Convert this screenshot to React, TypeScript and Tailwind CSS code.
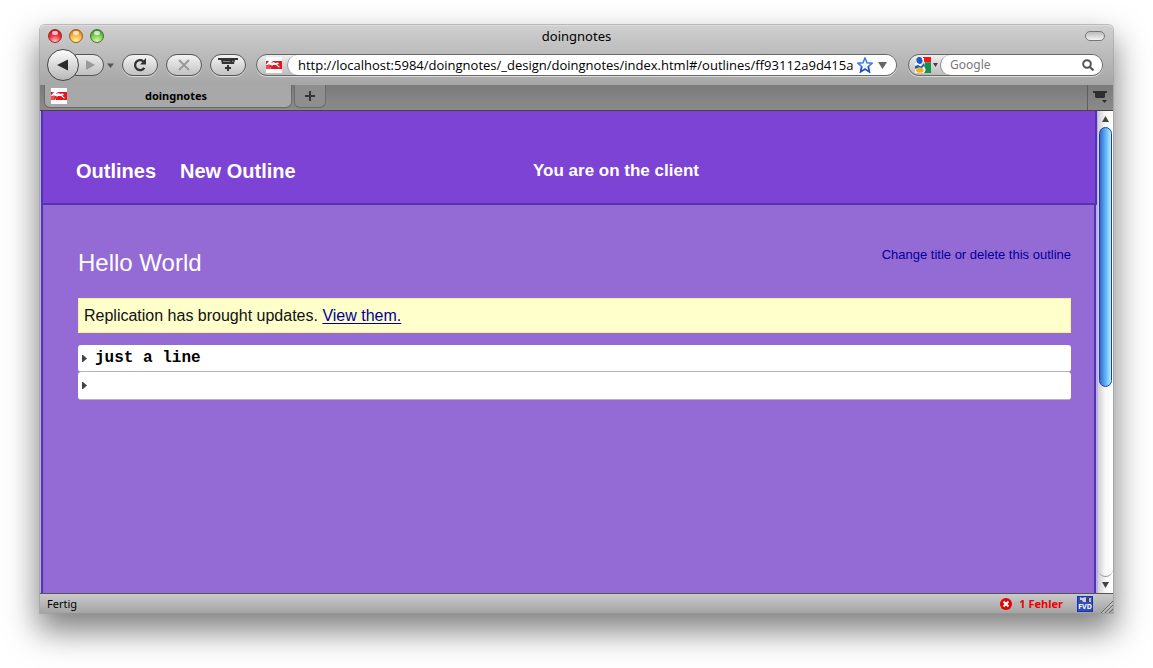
import React from "react";

const pill =
  "flex h-[22px] w-9 items-center justify-center rounded-full border border-[#555] bg-linear-to-b from-[#f4f4f4] to-[#c2c2c2] shadow-[0_1px_0_#d8d8d8]";

function Favicon() {
  return (
    <svg className="size-4 shrink-0" viewBox="0 0 16 16" aria-hidden="true">
      <rect width="16" height="16" fill="#fff" />
      <path d="M0 4h3v2h2l2-2h9v8H0z" fill="#e5141f" />
      <path d="M3 4l2 2 3-1 1 1 3-.5 1 1.500-2 .5 3 2.500-1 .5-3-2.500-3 0-2 2-2 2.500H4l2-4-3-1-2 1-1-1z" fill="#fff" />
      <path d="M0 8.500l3-1 1 1-1 3.500H0z" fill="#ee4b50" />
      <path d="M7 10.500l2-1.500 2 1.500v1.500H7z" fill="#e5141f" />
    </svg>
  );
}

const lightGloss = "mx-auto -mt-[5px] block h-1 w-[6px] rounded-full bg-white/70";

function TrafficLights() {
  return (
    <div className="flex gap-[7px]">
      <button aria-label="Close" className="size-[14px] rounded-full border border-[#8d3030] bg-[radial-gradient(circle_at_50%_95%,#ffc4c4_0%,#f03040_50%,#b80f1c_100%)]">
        <span className={lightGloss} />
      </button>
      <button aria-label="Minimize" className="size-[14px] rounded-full border border-[#96602a] bg-[radial-gradient(circle_at_50%_95%,#fff79a_0%,#f8b040_55%,#c0620f_100%)]">
        <span className={lightGloss} />
      </button>
      <button aria-label="Zoom" className="size-[14px] rounded-full border border-[#41752e] bg-[radial-gradient(circle_at_50%_95%,#d8ffa4_0%,#76c64e_55%,#2f7f1f_100%)]">
        <span className={lightGloss} />
      </button>
    </div>
  );
}

function TitleBar() {
  return (
    <div className="grid h-5 grid-cols-[1fr_auto_1fr] items-center px-2">
      <TrafficLights />
      <h1 className="text-[13px] leading-4 text-black">doingnotes</h1>
      <button aria-label="Toggle toolbar" className="h-[10px] w-5 justify-self-end rounded-full border border-[#777] bg-linear-to-b from-[#bbb] to-[#f4f4f4]" />
    </div>
  );
}

function Toolbar() {
  return (
    <div className="flex h-[39px] items-center pr-[10px] pb-px pl-[7px]">
      <button aria-label="Back" className="z-10 flex size-8 shrink-0 items-center justify-center rounded-full border border-[#444] bg-linear-to-b from-[#fdfdfd] to-[#b8b8b8]">
        <svg className="mr-[2px]" width="11" height="12" viewBox="0 0 11 12"><path d="M0 6L11 .5v11z" fill="#2b2b2b" /></svg>
      </button>
      <button aria-label="Forward" className="-ml-1 flex h-[22px] w-[29px] shrink-0 items-center justify-center rounded-r-full border border-[#555] bg-linear-to-b from-[#ececec] to-[#c0c0c0]">
        <svg width="10" height="10" viewBox="0 0 10 10"><path d="M10 5L1 0v10z" fill="#999" /></svg>
      </button>
      <button aria-label="History" className="ml-[3px]">
        <svg width="7" height="5" viewBox="0 0 7 5"><path d="M0 .5h7L3.500 5z" fill="#555" /></svg>
      </button>
      <div className="ml-2 flex shrink-0 gap-2">
        <button aria-label="Reload" className={pill}>
          <svg width="16" height="16" viewBox="0 0 16 16">
            <path d="M12.300 10.800A5 5 0 1 1 11.300 4.300" fill="none" stroke="#333" strokeWidth="2.300" />
            <path d="M14 1v6.500H8z" fill="#333" />
          </svg>
        </button>
        <button aria-label="Stop" className={pill}>
          <svg width="12" height="12" viewBox="0 0 12 12"><path d="M1 1l10 10M11 1L1 11" stroke="#999" strokeWidth="2" /></svg>
        </button>
        <button aria-label="Open toolbox" className={pill}>
          <svg width="20" height="14" viewBox="0 0 20 14">
            <path d="M0 0h20v2h-3l-1 4H4L3 2H0z" fill="#333" />
            <path d="M5 3.500h7M14 3.500h1.500" stroke="#888" />
            <path d="M10 7v6M7 10h6" stroke="#333" strokeWidth="2" />
          </svg>
        </button>
      </div>
      <div className="ml-[10px] flex h-[22px] min-w-0 flex-1 items-center overflow-hidden rounded-full border border-[#666] bg-linear-to-b from-[#efefef] to-[#bcbcbc] pl-[9px] shadow-[0_1px_0_#dcdcdc]">
        <Favicon />
        <div className="ml-[5px] flex h-full min-w-0 flex-1 items-center rounded-l-full border-l border-[#999] bg-white pr-[9px] pl-[10px]">
          <input
            aria-label="Address"
            className="min-w-0 flex-1 bg-transparent font-['Open_Sans','Noto_Sans',sans-serif] text-[13px] leading-4 text-black outline-none"
            defaultValue="http://localhost:5984/doingnotes/_design/doingnotes/index.html#/outlines/ff93112a9d415a"
          />
          <button aria-label="Bookmark" className="ml-[3px]">
            <svg width="16" height="16" viewBox="0 0 16 16">
              <path d="M8 1l2.100 4.700 5 .5-3.800 3.400 1.100 5.200L8 12.200l-4.400 2.600 1.100-5.200L.9 6.200l5-.5z" fill="#eaf5ff" stroke="#3f78d8" strokeWidth="1.500" />
              <path d="M4.700 9.600l-1.100 5.200L8 12.200l4.400 2.600-1.100-5.200" fill="none" stroke="#1d50c8" strokeWidth="1.500" />
            </svg>
          </button>
          <button aria-label="Address history" className="ml-[5px]">
            <svg width="9" height="7" viewBox="0 0 9 7"><path d="M0 0h9L4.500 7z" fill="#666" /></svg>
          </button>
        </div>
      </div>
      <div className="ml-[11px] flex h-[22px] w-[195px] shrink-0 items-center overflow-hidden rounded-full border border-[#666] bg-linear-to-b from-[#efefef] to-[#bcbcbc] pl-[6px] shadow-[0_1px_0_#dcdcdc]">
        <button aria-label="Search engine" className="flex items-center gap-[2px]">
          <svg width="16" height="16" viewBox="0 0 16 16">
            <path d="M0 6h10v10H0z" fill="#f4f6ff" />
            <path d="M8 0h8v5.500h-6L8 3z" fill="#f41616" />
            <path d="M10 5.500h6V16H9l2-3-2-4z" fill="#12914a" />
            <ellipse cx="4.500" cy="3.500" rx="3" ry="3.500" transform="rotate(-15 4.500 3.500)" fill="#1c5cc4" />
            <path d="M0 9l3-1 3 1.500L8 7l1-1v3l-2 2-3-.5L0 12z" fill="#1c5cc4" />
            <path d="M7 1l1 3-1 2 2-1.500V1z" fill="#fff" />
            <ellipse cx="4.800" cy="13.300" rx="3.800" ry="2.500" fill="#f4b310" />
          </svg>
          <svg width="5" height="4" viewBox="0 0 5 4"><path d="M0 0h5L2.500 4z" fill="#444" /></svg>
        </button>
        <div className="ml-[2px] flex h-full min-w-0 flex-1 items-center rounded-l-full border-l border-[#888] bg-white pr-2 pl-[9px]">
          <input aria-label="Search" placeholder="Google" className="min-w-0 flex-1 bg-transparent text-[12px] leading-4 outline-none placeholder:text-[#777]" />
          <button aria-label="Search">
            <svg width="12" height="12" viewBox="0 0 12 12">
              <circle cx="5" cy="5" r="3.800" fill="none" stroke="#555" strokeWidth="2" />
              <path d="M7.500 7.500L11.500 11.500" stroke="#555" strokeWidth="2.200" />
            </svg>
          </button>
        </div>
      </div>
    </div>
  );
}

function TabStrip() {
  return (
    <div className="flex h-[26px] border-b border-[#444] bg-linear-to-b from-[#7b7b7b] to-[#8b8b8b] pl-1">
      <div className="flex h-[23px] w-[248px] items-center rounded-b-md border-x border-b border-[#6b6b6b] bg-[#a8a8a8] pl-[6px]">
        <Favicon />
        <button className="flex-1 pr-[6px] text-center text-[11px] leading-4 font-bold text-black">doingnotes</button>
      </div>
      <button aria-label="New tab" className="ml-[2px] flex h-[23px] w-8 items-center justify-center rounded-b-md border-x border-b border-[#6b6b6b] bg-[#8e8e8e]">
        <svg width="10" height="10" viewBox="0 0 10 10"><path d="M5 0v10M0 5h10" stroke="#333" strokeWidth="2" /></svg>
      </button>
      <button aria-label="List tabs" className="ml-auto flex w-[26px] items-center justify-center border-l border-[#5e5e5e]">
        <svg width="15" height="13" viewBox="0 0 15 13">
          <path d="M0 0h14v2h-2v4l-1 1H3L2 6V2H0z" fill="#2e2e2e" />
          <path d="M9 9h5l-2.500 3z" fill="#2e2e2e" />
        </svg>
      </button>
    </div>
  );
}

function Bullet() {
  return (
    <svg width="5" height="7" viewBox="0 0 5 7" className="shrink-0" aria-hidden="true">
      <path d="M0 0h1l4 3.500L1 7H0z" fill="#444" />
    </svg>
  );
}

function OutlinePage() {
  return (
    <div className="min-w-0 flex-1 bg-[#c0aaf0] pl-px font-['Liberation_Sans',Arial,sans-serif]">
      <header className="mr-px grid h-[94px] grid-cols-[457px_1fr] items-center border-x-2 border-b-2 border-[#4f35b0] bg-[#7c43d4] pt-7 pl-[33px] font-bold text-white">
        <nav className="flex gap-6 text-[20px] leading-6">
          <a href="#/outlines">Outlines</a>
          <a href="#/outlines/new">New Outline</a>
        </nav>
        <p className="text-[17px] leading-6">You are on the client</p>
      </header>
      <main className="mr-[2px] min-h-[388px] border-x-2 border-[#4f35b0] bg-[#946ad5] pt-[42px] pr-[23px] pl-[35px]">
        <div className="flex items-start justify-between">
          <h2 className="text-[24px] leading-8 text-white">Hello World</h2>
          <a href="#/outlines/edit" className="text-[13px] leading-4 text-[#000099]">Change title or delete this outline</a>
        </div>
        <p className="mt-[19px] border border-[#fcf28c] bg-[#ffffcc] px-[5px] py-[5px] text-[16px] leading-[23px] text-[#111]">
          Replication has brought updates.{" "}
          <a href="#/updates" className="text-[#000099] underline underline-offset-2">View them.</a>
        </p>
        <ul className="mt-3 font-['Liberation_Mono','Courier_New',monospace] text-[16px] font-bold text-black">
          <li className="flex h-[27px] items-center gap-2 rounded-[3px] border-b border-[#b4b4b4] bg-white pl-1">
            <Bullet />
            just a line
          </li>
          <li className="flex h-[28px] items-center rounded-[3px] border-b border-[#b4b4b4] bg-white pl-1">
            <Bullet />
          </li>
        </ul>
      </main>
    </div>
  );
}

function Scrollbar() {
  return (
    <div className="flex w-[15px] shrink-0 flex-col bg-linear-to-r from-[#d0d0d0] via-[#f8f8f8] to-[#fff]">
      <button aria-label="Scroll up" className="flex h-4 items-center justify-center">
        <svg width="7" height="6" viewBox="0 0 7 6"><path d="M0 6h7L3.500 0z" fill="#444" /></svg>
      </button>
      <div className="flex-1">
        <div className="mx-px h-[260px] rounded-full border border-[#1c3f9c] bg-linear-to-r from-[#3568cf] via-[#62b1f7] to-[#b1efff]" />
      </div>
      <div className="h-3 rounded-b-full border-b border-[#999]" />
      <button aria-label="Scroll down" className="flex h-4 items-center justify-center">
        <svg width="7" height="6" viewBox="0 0 7 6"><path d="M0 0h7L3.500 6z" fill="#444" /></svg>
      </button>
    </div>
  );
}

function StatusBar() {
  return (
    <footer className="flex h-5 items-center border-t border-[#555] bg-linear-to-b from-[#cacaca] to-[#a4a4a4] pl-[7px] text-[11px] leading-4">
      <span className="text-black">Fertig</span>
      <button className="ml-auto flex items-center gap-[7px] font-bold text-[#f00000]">
        <svg width="12" height="12" viewBox="0 0 12 12">
          <circle cx="6" cy="6" r="6" fill="#e60000" />
          <path d="M3.500 3.500l5 5M8.500 3.500l-5 5" stroke="#fff" strokeWidth="2" />
        </svg>
        1 Fehler
      </button>
      <button aria-label="FVD" className="ml-[14px] flex size-4 flex-col items-center justify-end overflow-hidden border border-[#1030d0] bg-[#3450b8]">
        <svg width="11" height="6" viewBox="0 0 11 6"><path d="M0 0l2 1 4-1v5H3L2 3 0 3z" fill="#ccd0e0" /><path d="M6 1h3v4H6z" fill="#444" /><path d="M9 1h2v4H9z" fill="#bbc" /></svg>
        <span className="text-[7px] leading-[8px] font-bold text-white">FVD</span>
      </button>
      <svg className="ml-2 self-end" width="12" height="12" viewBox="0 0 12 12" aria-hidden="true">
        <path d="M0 12L12 0M4 12l8-8M8 12l4-4" stroke="#666" />
        <path d="M1 12.500L12 1.500M5 12.500l7-7" stroke="#ddd" strokeWidth=".6" />
      </svg>
    </footer>
  );
}

export default function App() {
  return (
    <div className="min-h-screen overflow-hidden bg-white px-10 pt-[25px] pb-12 font-['Noto_Sans','Open_Sans',sans-serif]">
      <div className="rounded-t-[5px] shadow-[0_0_0_1px_#9999,0_16px_32px_2px_rgba(0,0,0,0.5)]">
        <div className="rounded-t-[5px] border-t border-[#ddd] bg-linear-to-b from-[#cfcfcf] to-[#a6a6a6]">
          <TitleBar />
          <Toolbar />
        </div>
        <TabStrip />
        <div className="flex">
          <OutlinePage />
          <Scrollbar />
        </div>
        <StatusBar />
      </div>
    </div>
  );
}
